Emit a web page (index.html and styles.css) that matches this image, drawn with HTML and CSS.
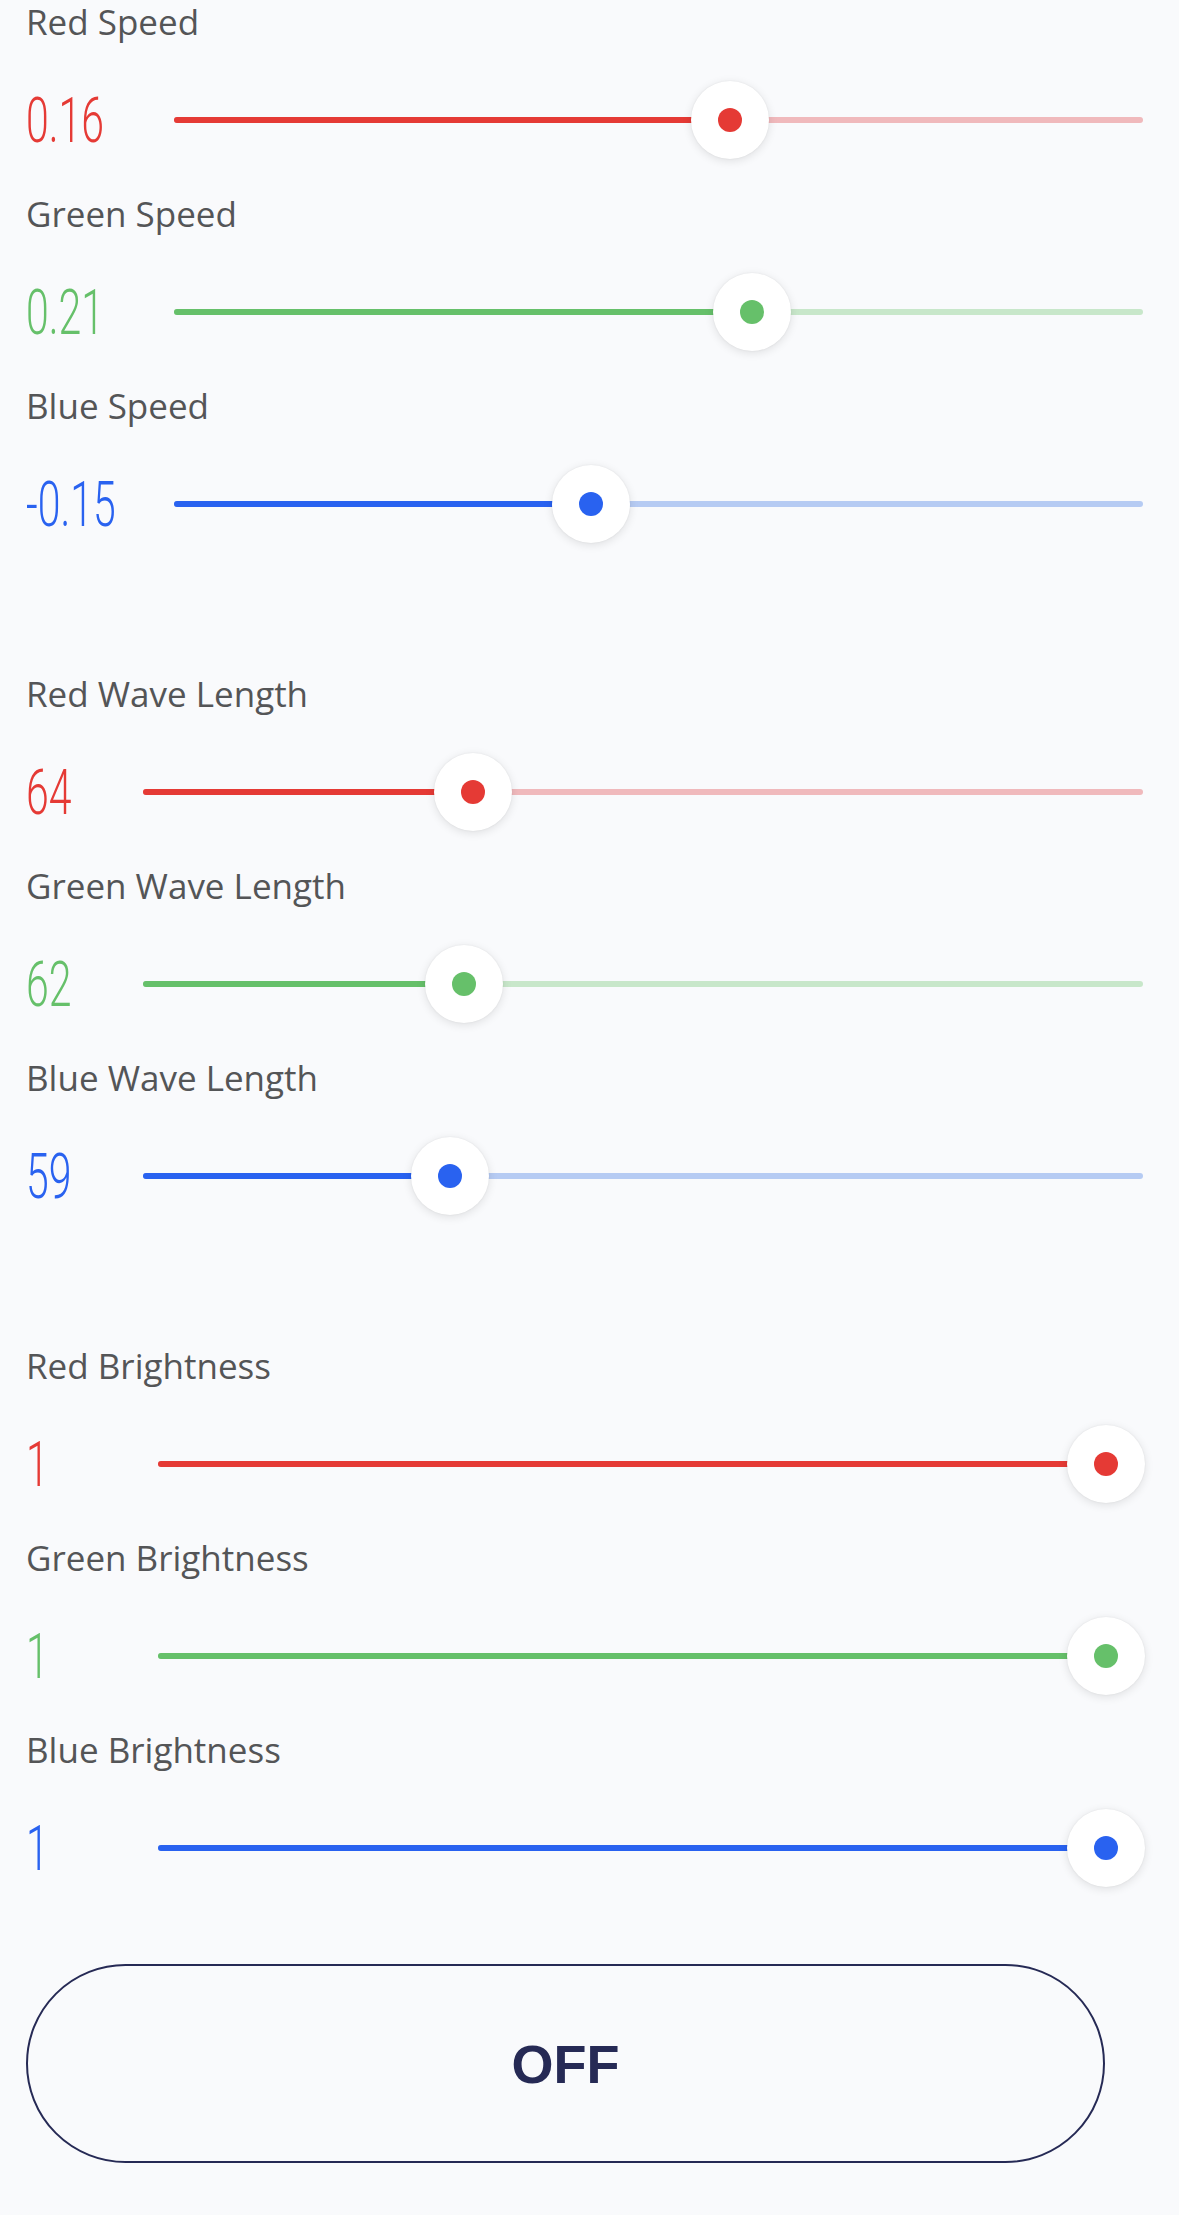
FILE: index.html
```html
<!DOCTYPE html>
<html lang="en">
<head>
<meta charset="utf-8">
<title>Wave Controls</title>
<link rel="stylesheet" href="styles.css">
</head>
<body>
<main class="panel">
  <section class="group group--speed">
    <div class="control control--red">
      <div class="control__label">Red Speed</div>
      <div class="control__row">
        <span class="control__value">0.16</span>
        <div class="slider" style="--p:0.58">
          <div class="slider__track"><div class="slider__fill"></div></div>
          <div class="slider__thumb"><span class="slider__dot"></span></div>
        </div>
      </div>
    </div>
    <div class="control control--green">
      <div class="control__label">Green Speed</div>
      <div class="control__row">
        <span class="control__value">0.21</span>
        <div class="slider" style="--p:0.605">
          <div class="slider__track"><div class="slider__fill"></div></div>
          <div class="slider__thumb"><span class="slider__dot"></span></div>
        </div>
      </div>
    </div>
    <div class="control control--blue">
      <div class="control__label">Blue Speed</div>
      <div class="control__row">
        <span class="control__value">-0.15</span>
        <div class="slider" style="--p:0.425">
          <div class="slider__track"><div class="slider__fill"></div></div>
          <div class="slider__thumb"><span class="slider__dot"></span></div>
        </div>
      </div>
    </div>
  </section>

  <section class="group group--wave">
    <div class="control control--red">
      <div class="control__label">Red Wave Length</div>
      <div class="control__row">
        <span class="control__value">64</span>
        <div class="slider" style="--p:0.3166">
          <div class="slider__track"><div class="slider__fill"></div></div>
          <div class="slider__thumb"><span class="slider__dot"></span></div>
        </div>
      </div>
    </div>
    <div class="control control--green">
      <div class="control__label">Green Wave Length</div>
      <div class="control__row">
        <span class="control__value">62</span>
        <div class="slider" style="--p:0.3065">
          <div class="slider__track"><div class="slider__fill"></div></div>
          <div class="slider__thumb"><span class="slider__dot"></span></div>
        </div>
      </div>
    </div>
    <div class="control control--blue">
      <div class="control__label">Blue Wave Length</div>
      <div class="control__row">
        <span class="control__value">59</span>
        <div class="slider" style="--p:0.2915">
          <div class="slider__track"><div class="slider__fill"></div></div>
          <div class="slider__thumb"><span class="slider__dot"></span></div>
        </div>
      </div>
    </div>
  </section>

  <section class="group group--bright">
    <div class="control control--red">
      <div class="control__label">Red Brightness</div>
      <div class="control__row">
        <span class="control__value">1</span>
        <div class="slider" style="--p:1">
          <div class="slider__track"><div class="slider__fill"></div></div>
          <div class="slider__thumb"><span class="slider__dot"></span></div>
        </div>
      </div>
    </div>
    <div class="control control--green">
      <div class="control__label">Green Brightness</div>
      <div class="control__row">
        <span class="control__value">1</span>
        <div class="slider" style="--p:1">
          <div class="slider__track"><div class="slider__fill"></div></div>
          <div class="slider__thumb"><span class="slider__dot"></span></div>
        </div>
      </div>
    </div>
    <div class="control control--blue">
      <div class="control__label">Blue Brightness</div>
      <div class="control__row">
        <span class="control__value">1</span>
        <div class="slider" style="--p:1">
          <div class="slider__track"><div class="slider__fill"></div></div>
          <div class="slider__thumb"><span class="slider__dot"></span></div>
        </div>
      </div>
    </div>
  </section>

  <button class="power" type="button">OFF</button>
</main>
</body>
</html>
```

FILE: styles.css
```css
html, body {
  margin: 0;
  background: #f9fafc;
}

.panel {
  padding: 0 36px 52px 26px;
}

.group + .group {
  margin-top: 96px;
}

.control {
  height: 192px;
}

.control--red   { --c: #e53a35; --light: #f0b9bc; }
.control--green { --c: #66c06a; --light: #c8e7ca; }
.control--blue  { --c: #2962f0; --light: #b6cbf3; }

.control__label {
  height: 44px;
  font-family: "Open Sans", "Noto Sans", sans-serif;
  font-size: 35px;
  line-height: 44px;
  color: #545557;
  white-space: nowrap;
}

.control__row {
  height: 148px;
  box-sizing: border-box;
  padding-top: 4px;
  display: flex;
  align-items: center;
}

.control__value {
  flex: none;
  font-family: Roboto, "Liberation Sans", sans-serif;
  font-weight: 300;
  font-size: 63px;
  line-height: 1;
  color: var(--c);
  white-space: nowrap;
  transform: scaleX(0.65);
  transform-origin: left center;
}

.group--speed .control__value { width: 148px; }
.group--wave .control__value { width: 117px; }
.group--bright .control__value { width: 132px; }

.slider {
  flex: 1;
  position: relative;
  height: 78px;
  display: flex;
  align-items: center;
}

.slider__track {
  width: 100%;
  height: 6px;
  border-radius: 3px;
  background: var(--light);
  overflow: hidden;
}

.slider__fill {
  height: 100%;
  width: calc(39px + var(--p) * (100% - 78px));
  background: var(--c);
}

.slider__thumb {
  position: absolute;
  top: 0;
  left: calc(var(--p) * (100% - 74px) - 2px);
  width: 78px;
  height: 78px;
  border-radius: 50%;
  background: #ffffff;
  box-shadow: 0 2px 10px rgba(0, 0, 0, 0.11), 0 0 2px rgba(0, 0, 0, 0.07);
  display: flex;
  align-items: center;
  justify-content: center;
}

.slider__dot {
  width: 24px;
  height: 24px;
  border-radius: 50%;
  background: var(--c);
}

.power {
  display: flex;
  align-items: center;
  justify-content: center;
  box-sizing: border-box;
  width: 1079px;
  height: 199px;
  margin: 44px 0 0;
  padding: 0;
  border: 2.5px solid #262a55;
  border-radius: 100px;
  background: transparent;
  font-family: "Liberation Sans", Arial, sans-serif;
  font-weight: 700;
  font-size: 54px;
  color: #262a55;
}
```
